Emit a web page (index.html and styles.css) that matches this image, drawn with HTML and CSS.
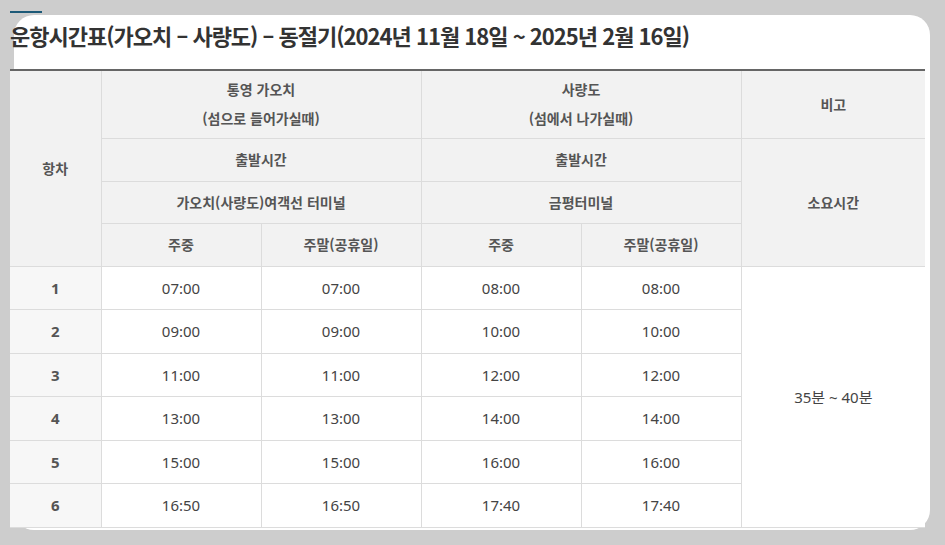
FILE: index.html
```html
<!DOCTYPE html>
<html lang="ko">
<head>
<meta charset="utf-8">
<title>운항시간표</title>
<link rel="stylesheet" href="styles.css">
</head>
<body>
<div class="page">
  <div class="card">
    <div class="content">
      <div class="accent"></div>
      <h2 class="title">운항시간표(가오치 – 사량도) – 동절기(2024년 11월 18일 ~ 2025년 2월 16일)</h2>
      <table class="schedule">
        <colgroup>
          <col class="c-no"><col class="c-t"><col class="c-t"><col class="c-t"><col class="c-t"><col class="c-note">
        </colgroup>
        <thead>
          <tr class="h1">
            <th rowspan="4">항차</th>
            <th colspan="2">통영 가오치<br>(섬으로 들어가실때)</th>
            <th colspan="2">사량도<br>(섬에서 나가실때)</th>
            <th>비고</th>
          </tr>
          <tr class="h2">
            <th colspan="2">출발시간</th>
            <th colspan="2">출발시간</th>
            <th rowspan="3">소요시간</th>
          </tr>
          <tr class="h3">
            <th colspan="2">가오치(사량도)여객선 터미널</th>
            <th colspan="2">금평터미널</th>
          </tr>
          <tr class="h4">
            <th>주중</th><th>주말(공휴일)</th><th>주중</th><th>주말(공휴일)</th>
          </tr>
        </thead>
        <tbody>
          <tr class="ra"><th>1</th><td>07:00</td><td>07:00</td><td>08:00</td><td>08:00</td><td rowspan="6" class="note">35분 ~ 40분</td></tr>
          <tr class="rb"><th>2</th><td>09:00</td><td>09:00</td><td>10:00</td><td>10:00</td></tr>
          <tr class="ra"><th>3</th><td>11:00</td><td>11:00</td><td>12:00</td><td>12:00</td></tr>
          <tr class="rb"><th>4</th><td>13:00</td><td>13:00</td><td>14:00</td><td>14:00</td></tr>
          <tr class="ra"><th>5</th><td>15:00</td><td>15:00</td><td>16:00</td><td>16:00</td></tr>
          <tr class="rb"><th>6</th><td>16:50</td><td>16:50</td><td>17:40</td><td>17:40</td></tr>
        </tbody>
      </table>
    </div>
  </div>
</div>
</body>
</html>
```
FILE: styles.css
```css
html, body {
  margin: 0;
  padding: 0;
  background: #cdcdcd;
  font-family: "Noto Sans CJK KR", "Noto Sans", sans-serif;
  color: #444;
}
.page {
  padding: 15px 0 0 14px;
  height: 530px;
  overflow: hidden;
}
.card {
  display: flow-root;
  width: 916px;
  height: 515px;
  background: #fff;
  border-radius: 20px;
}
.content {
  margin: -4px 0 0 -4px;
  width: 915px;
}
.accent {
  width: 32px;
  height: 2px;
  background: #1d5a78;
}
.title {
  margin: 8px 0 0 0;
  height: 48px;
  font-size: 22px;
  line-height: 28px;
  font-weight: 700;
  color: #333;
  letter-spacing: -1px;
  white-space: nowrap;
}
.schedule {
  width: 915px;
  border-collapse: collapse;
  table-layout: fixed;
  border-top: 2px solid #666;
  font-size: 14px;
}
.c-no { width: 91px; }
.c-t { width: 160px; }
.c-note { width: 184px; }
.schedule th,
.schedule td {
  border: 1px solid #dcdcdc;
  text-align: center;
  vertical-align: middle;
  padding: 0;
}
.schedule tr > :first-child { border-left: none; }
.schedule tr > :last-child { border-right: none; }
.schedule tbody tr:first-child > .note { border-right: none; }
.schedule thead th {
  background: #f2f2f2;
  color: #555;
  font-weight: 700;
  line-height: 29px;
}
.h1 { height: 68px; }
.h2 { height: 43px; }
.h3 { height: 42px; }
.h4 { height: 43px; }
.schedule tbody th {
  background: #f7f7f7;
  color: #555;
  font-family: "Noto Sans", "Noto Sans CJK KR", sans-serif;
  font-weight: 700;
  font-size: 15px;
}
.schedule tbody td {
  background: #fff;
  color: #444;
  font-family: "Noto Sans", "Noto Sans CJK KR", sans-serif;
  font-size: 15px;
}
.ra { height: 43px; }
.rb { height: 44px; }
```
